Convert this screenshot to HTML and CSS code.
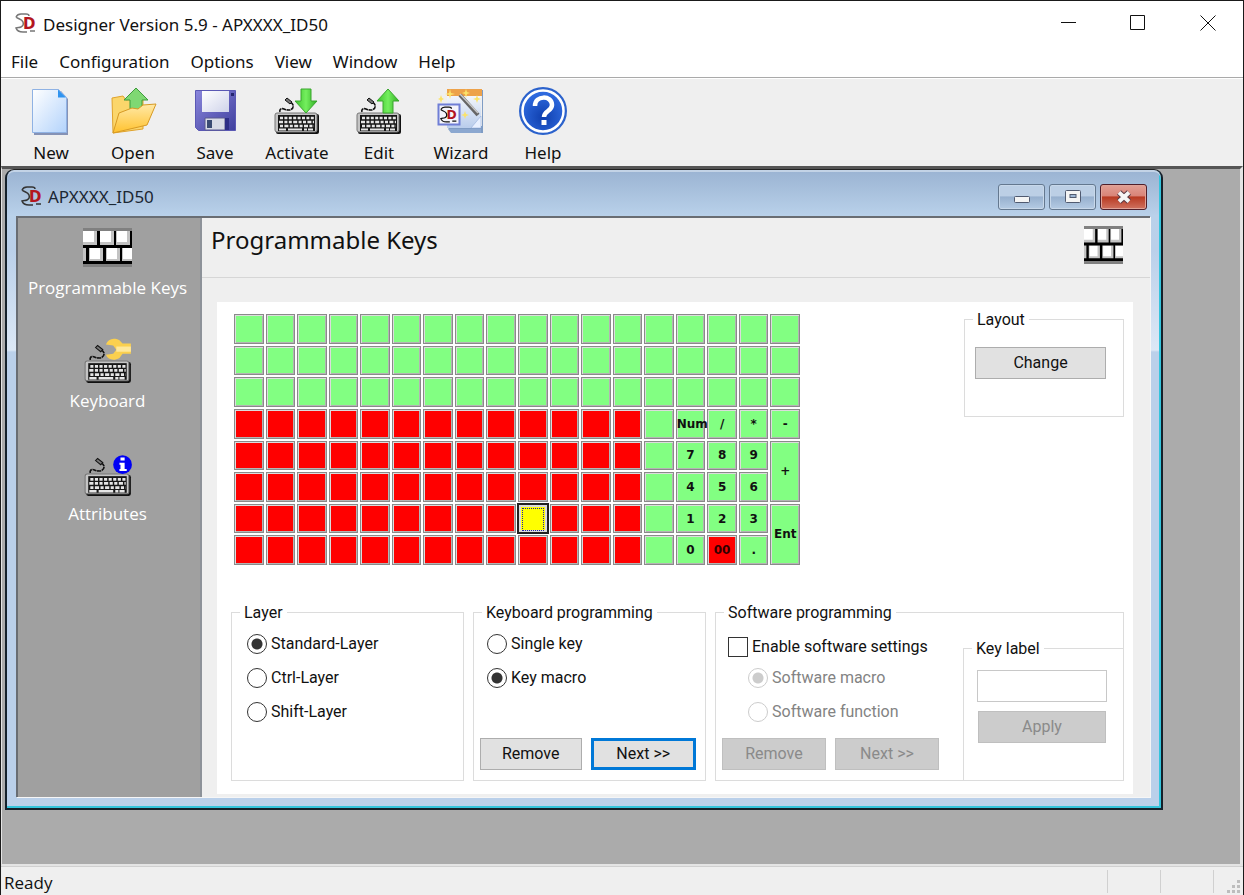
FILE: index.html
```
<!DOCTYPE html>
<html lang="en">
<head>
<meta charset="utf-8">
<title>Designer Version 5.9 - APXXXX_ID50</title>
<link rel="stylesheet" href="styles.css">
</head>
<body>
<svg class="defs" aria-hidden="true">
  <defs>
    <linearGradient id="gPage" x1="0" y1="0" x2="1" y2="1"><stop offset="0" stop-color="#fff"/><stop offset="1" stop-color="#b3d3fb"/></linearGradient>
    <linearGradient id="gFold" x1="0" y1="0" x2="0" y2="1"><stop offset="0" stop-color="#ffe9a8"/><stop offset="1" stop-color="#ffc22e"/></linearGradient>
    <linearGradient id="gGreen" x1="0" y1="0" x2="1" y2="0"><stop offset="0" stop-color="#3cc02c"/><stop offset=".5" stop-color="#74ef5e"/><stop offset="1" stop-color="#2fae22"/></linearGradient>
    <linearGradient id="gDisk" x1="0" y1="0" x2="1" y2="1"><stop offset="0" stop-color="#8a86dc"/><stop offset="1" stop-color="#3f3f9e"/></linearGradient>
    <linearGradient id="gWhite" x1="0" y1="0" x2="1" y2="1"><stop offset="0" stop-color="#fff"/><stop offset="1" stop-color="#cfd3ea"/></linearGradient>
    <radialGradient id="gHelp" cx=".5" cy=".65" r=".6"><stop offset="0" stop-color="#0f3fae"/><stop offset="1" stop-color="#2f6be0"/></radialGradient>
    <linearGradient id="gBook" x1="0" y1="0" x2="0" y2="1"><stop offset="0" stop-color="#fdfdff"/><stop offset="1" stop-color="#b9cdec"/></linearGradient>
    <symbol id="keyboard" viewBox="0 0 50 50">
      <path d="M8 26c-1-3 2-4 4-3s3 1 5 1 5-2 4-5-3-2-4-4" fill="none" stroke="#111" stroke-width="1.600" stroke-dasharray="4 .6"/>
      <path d="M13 14l2-2 5 4-2 2z" fill="#777" stroke="#111"/>
      <rect x="4" y="28" width="43" height="20" rx="2" fill="#111"/>
      <rect x="3" y="27" width="42" height="19" rx="2" fill="#c4c4c4" stroke="#777"/>
      <rect x="6" y="29" width="37" height="16" fill="#161616"/>
      <g stroke="#e6e6e6" stroke-width="2.600" fill="none">
        <path d="M8 32h34" stroke-dasharray="3 1.400"/>
        <path d="M7 36h35" stroke-dasharray="4 1.400 3 1.400 3 1.400"/>
        <path d="M8 40h34" stroke-dasharray="3 1.400 4 1.400"/>
        <path d="M7 43.500h7m2 0h14m2 0h3m1 0h5" stroke-width="2.200"/>
      </g>
    </symbol>
    <symbol id="bricks" viewBox="0 0 49 39" preserveAspectRatio="none">
      <path fill="#c3c3c3" d="M0 0h49v39H0z"/>
      <path fill="#808080" d="M0 0h49v3H0zM0 36h49v3H0z"/>
      <path fill="#fff" d="M0 3h11v11H0zM17 3h11v11H17zM34 3h10v11H34zM7 20h10v11H7zM24 20h10v11H24zM40 20h9v11h-9z"/>
      <path fill="#000" d="M14 3h3v14h-3zM31 3h2v14h-2zM47 3h2v14h-2zM0 17h49v3H0zM3 20h3v14H3zM20 20h3v14h-3zM37 20h2v14h-2zM0 33h49v3H0z"/>
    </symbol>
    <symbol id="logo" viewBox="0 0 22 20">
      <path d="M1 4c1-2 3-3 5-3h5c2 0 3 1 3 2M1 4c2 2 6 2 7 5s0 4-2 5-3 0-5 1c1 3 4 4 7 4h4m3-1h5" fill="none" stroke="currentColor" stroke-width="1.500"/>
      <text x="8" y="16" class="logo-letter">D</text>
    </symbol>
  </defs>
</svg>
<div class="app">
  <header class="titlebar">
    <svg class="logo light"><use href="#logo"/></svg>
    <h1>Designer Version 5.9 - APXXXX_ID50</h1>
    <div class="caption-buttons">
      <button type="button" aria-label="Minimize"><svg width="16" height="16"><path d="M1 7.500h15"/></svg></button>
      <button type="button" aria-label="Maximize"><svg width="16" height="16"><path d="M.5.5h14v14H.5z"/></svg></button>
      <button type="button" aria-label="Close"><svg width="16" height="16"><path d="M.5.5l15 15M15.500.5l-15 15"/></svg></button>
    </div>
  </header>
  <nav class="menu">
    <button type="button">File</button><button type="button">Configuration</button><button type="button">Options</button><button type="button">View</button><button type="button">Window</button><button type="button">Help</button>
  </nav>
  <div class="toolbar">
    <button type="button"><svg viewBox="0 0 50 50">
      <path d="M8 5h27l7 8v36H8z" fill="#8592b5"/><path d="M6.500 3.500h26l8 8v35h-34z" fill="url(#gPage)" stroke="#8fb2e4"/><path d="M32 3.500l8 8h-8z" fill="#2f93ef"/></svg>New</button>
    <button type="button"><svg viewBox="0 0 50 50">
      <path d="M4 12l11-2 3 4 17-3v32L5 47z" fill="#fbd66b" stroke="#e0a32c"/>
      <path d="M28 2l12 12h-6v14H22V14h-6z" fill="#7fd873" stroke="#3f9c3c"/>
      <path d="M11 27l13-5 6 1 5-4 13-1-9 21-34 8z" fill="url(#gFold)" stroke="#d79a24"/></svg>Open</button>
    <button type="button"><svg viewBox="0 0 50 50">
      <path d="M5.500 4.500h40v40h-37l-3-3z" fill="url(#gDisk)" stroke="#5a58b4"/><path d="M12 5h27v21H12z" fill="url(#gWhite)"/><path d="M41 7h3v3h-3z" fill="#25256e"/>
      <path d="M15 32h20v12H15z" fill="#d9dbe6" stroke="#5a5a8e"/><path d="M17 34h5v8h-5z" fill="#3b4b73"/><path d="M35 32h4v12h-4z" fill="#2e2e86"/></svg>Save</button>
    <button type="button"><svg viewBox="0 0 50 50"><use href="#keyboard"/><path d="M29 3h10v12h6L34 27 23 15h6z" fill="url(#gGreen)" stroke="#3aa52f"/></svg>Activate</button>
    <button type="button"><svg viewBox="0 0 50 50"><use href="#keyboard"/><path d="M34 3l11 12h-6v12H29V15h-6z" fill="url(#gGreen)" stroke="#3aa52f"/></svg>Edit</button>
    <button type="button"><svg viewBox="0 0 50 50">
      <path d="M12 40h34V4h1v43H16l-4-5z" fill="#7f9cc4"/><path d="M11 4h34v38l-8 0H11z" fill="url(#gBook)"/><path d="M45 30v12l-10 0z" fill="#e8f0ff" stroke="#8ba6d4" stroke-width=".5"/>
      <path d="M11 3h35v7H11z" fill="#eda24a"/><path d="M12 43h33v4H15z" fill="#8ca8d0"/>
      <path d="M24 9l18 20" stroke="#666" stroke-width="4"/><path d="M24 8l18 19" stroke="#c9c9c9" stroke-width="1.500"/>
      <path d="M14 3l1 4 4 1-4 1-1 4-1-4-4-1 4-1zM30 3l1 3 3 1-3 1-1 4-1-4-3-1 3-1zM41 9l1 3 3 1-3 1-1 3-1-3-3-1 3-1zM29 25l1 3 3 1-3 1-1 3-1-3-3-1 3-1zM5 9l1 3 2 1-2 1-1 3-1-3-2-1 2-1z" fill="#fbe36a"/>
      <path d="M2.500 18.500h21v20h-21z" fill="#f4f4fb" stroke="#6f7ed6" stroke-width="2"/>
      <svg x="4" y="20" width="18" height="17"><use href="#logo"/></svg></svg>Wizard</button>
    <button type="button"><svg viewBox="0 0 50 50"><circle cx="25" cy="25" r="24" fill="#2b62cc"/><circle cx="25" cy="25" r="20.500" fill="url(#gHelp)" stroke="#fff" stroke-width="2.500"/>
      <path d="M17 20c0-11 17-11 17-1 0 6-8 6-8 12" fill="none" stroke="#fff" stroke-width="4.500"/><path d="M23.500 34h5v5h-5z" fill="#fff"/></svg>Help</button>
  </div>
  <main class="workspace">
    <section class="child">
      <header class="child-title">
        <svg class="logo"><use href="#logo"/></svg>
        <h2>APXXXX_ID50</h2>
        <div class="child-buttons">
          <button type="button" aria-label="Minimize"><svg width="20" height="14"><rect x="2.500" y="6.500" width="15" height="6" rx="1" fill="#f4f4f4" stroke="#505a70"/></svg></button>
          <button type="button" aria-label="Restore"><svg width="16" height="14"><rect x=".5" y=".5" width="15" height="12" rx="1" fill="#f4f4f4" stroke="#505a70"/><rect x="5" y="4.500" width="6" height="3" fill="#9db6d4" stroke="#505a70"/></svg></button>
          <button type="button" class="close" aria-label="Close"><svg width="18" height="14"><path d="M4 2.500l10 9M14 2.500l-10 9" stroke="#5a3a44" stroke-width="6"/><path d="M4 2.500l10 9M14 2.500l-10 9" stroke="#f6f6f6" stroke-width="4"/></svg></button>
        </div>
      </header>
      <div class="client">
        <nav class="side">
          <button type="button"><svg class="brick-icon"><use href="#bricks"/></svg>Programmable Keys</button>
          <button type="button"><svg class="kb-icon" viewBox="0 0 50 50"><use href="#keyboard"/><path d="M23 11l7 1 3 4-3 4-7 1c2 5 8 6 13 3l3-4h8V10h-8l-3-3c-6-3-11-1-13 4z" fill="#fbd04e"/><path d="M33 13h14v5H33z" fill="#ffe89a"/></svg>Keyboard</button>
          <button type="button"><svg class="kb-icon" viewBox="0 0 50 50"><use href="#keyboard"/><circle cx="39" cy="18" r="9" fill="#0000f4"/><path d="M37 11h4v3h-4zM36 16h5v6h2v2h-7v-2h1v-4h-1z" fill="#fff"/></svg>Attributes</button>
        </nav>
        <div class="page">
          <header class="page-head"><h3>Programmable Keys</h3><svg class="head-icon"><use href="#bricks"/></svg></header>
          <div class="panel">
            <div class="top-row">
              <div class="keys" id="keys"></div>
              <fieldset class="layout-box"><legend>Layout</legend><button type="button" class="btn">Change</button></fieldset>
            </div>
            <div class="groups">
              <fieldset><legend>Layer</legend>
                <label class="opt"><input type="radio" name="layer" checked>Standard-Layer</label>
                <label class="opt"><input type="radio" name="layer">Ctrl-Layer</label>
                <label class="opt"><input type="radio" name="layer">Shift-Layer</label>
              </fieldset>
              <fieldset><legend>Keyboard programming</legend>
                <div class="stack">
                  <label class="opt"><input type="radio" name="kp">Single key</label>
                  <label class="opt"><input type="radio" name="kp" checked>Key macro</label>
                  <div class="actions"><button type="button" class="btn">Remove</button><button type="button" class="btn primary">Next &gt;&gt;</button></div>
                </div>
              </fieldset>
              <fieldset class="software"><legend>Software programming</legend>
                <div class="split">
                  <div class="stack">
                    <label class="opt check"><input type="checkbox">Enable software settings</label>
                    <label class="opt sub"><input type="radio" name="sp" checked disabled>Software macro</label>
                    <label class="opt sub"><input type="radio" name="sp" disabled>Software function</label>
                    <div class="actions"><button type="button" class="btn" disabled>Remove</button><button type="button" class="btn" disabled>Next &gt;&gt;</button></div>
                  </div>
                  <fieldset class="key-label"><legend><label for="keylabel">Key label</label></legend>
                    <input type="text" id="keylabel">
                    <button type="button" class="btn" disabled>Apply</button>
                  </fieldset>
                </div>
              </fieldset>
            </div>
          </div>
        </div>
      </div>
    </section>
  </main>
  <footer class="status"><span class="ready">Ready</span><span class="cell"></span><span class="cell"></span><span class="cell grip"><svg width="13" height="13" fill="#bdbdbd"><path d="M10 0h3v3h-3zM5 5h3v3H5zM10 5h3v3h-3zM0 10h3v3H0zM5 10h3v3H5zM10 10h3v3h-3z"/></svg></span></footer>
</div>
<script src="keys.js"></script>
</body>
</html>
```
FILE: styles.css
```
* { box-sizing: border-box; }
body {
  margin: 0;
  background: #efefef;
  color: #111;
  font: 17px/22px "Noto Sans", "Open Sans", sans-serif;
}
h1, h2, h3 { margin: 0; font-weight: 400; }
button, input { font: inherit; color: inherit; }
button { padding: 0; border: 0; background: none; }
.defs { position: absolute; width: 0; height: 0; }
.app {
  display: flex;
  flex-direction: column;
  min-height: 100vh;
  border: 1px solid #1a1a1a;
  border-bottom: 0;
}
.logo { width: 22px; height: 20px; margin-bottom: 3px; color: #333; }
.logo.light { color: #777; }
.logo-letter { font: bold 15px "DejaVu Sans", sans-serif; fill: #b3161f; }

.titlebar {
  display: flex;
  align-items: center;
  height: 47px;
  padding-left: 14px;
  background: #fff;
}
.titlebar h1 { margin-left: 6px; font-size: 17px; flex: 1; }
.caption-buttons { display: flex; align-self: flex-start; }
.caption-buttons button { width: 70px; height: 44px; }
.caption-buttons svg { display: block; margin: auto; fill: none; stroke: #111; }

.menu {
  display: flex;
  gap: 21px;
  height: 30px;
  padding-left: 10px;
  background: #fff;
  border-bottom: 1px solid #aaa;
}
.menu button { height: 27px; }

.toolbar {
  display: flex;
  height: 88px;
  padding: 6px 0 0 9px;
  border-top: 1px solid #fff;
  background: #efefef;
}
.toolbar button { width: 82px; height: 80px; }
.toolbar button > svg { display: block; width: 50px; height: 50px; margin: 0 auto 6px; }

.workspace {
  flex: 1;
  padding: 0 77px 32px 3px;
  border: solid #e4e4e4;
  border-width: 0 3px 2px 1px;
  border-top: 3px solid #555;
  background: #ababab;
}
.child {
  padding: 0 11px 11px 9px;
  border: 2px solid #15212b;
  border-top: 1px solid #222;
  border-radius: 9px 9px 0 0;
  box-shadow: inset 0 2px 0 #c3d3e6, inset -2px -2px 0 #34c4dc;
  background: linear-gradient(#9ab3d2 0, #b9d1ea 46px, #bad0ea 80px, #dce8f6 180px, #bad0ea 182px);
}
.child-title {
  display: flex;
  align-items: center;
  height: 46px;
  padding: 8px 3px 0 5px;
}
.child-title h2 { flex: 1; margin-left: 5px; font-size: 17px; color: #1b2733; }
.child-buttons { display: flex; gap: 4px; }
.child-buttons button {
  display: grid;
  place-items: center;
  width: 47px;
  height: 26px;
  border: 1px solid #64788f;
  border-radius: 3px;
  box-shadow: inset 0 0 0 1px #c8d8ea;
  background: linear-gradient(#bccfe5 0 45%, #97b0ce 50%, #b5cbe4);
}
.child-buttons .close {
  border-color: #501f2a;
  box-shadow: inset 0 0 0 1px #e0a398;
  background: linear-gradient(#e2a095 0, #d98478 45%, #b83a22 50%, #d07260);
}
.client {
  display: flex;
  border: solid #696d73;
  border-width: 2px 0 0 2px;
  box-shadow: 1px 1px 0 #f6f6f6;
  background: #efefef;
}
.side {
  display: flex;
  flex-direction: column;
  width: 184px;
  padding: 10px 3px 0 0;
  background: #a0a0a0;
  border-right: 2px solid #8d9299;
  font-family: "Open Sans", "Noto Sans", sans-serif;
}
.side button {
  display: flex;
  flex-direction: column;
  align-items: center;
  justify-content: flex-end;
  height: 113px;
  padding-bottom: 32px;
  color: #fff;
}
.side button:first-child { height: 103px; }
.side .brick-icon { width: 49px; height: 39px; margin-bottom: 10px; }
.side .kb-icon { width: 54px; height: 52px; margin-bottom: 5px; }

.page { flex: 1; min-width: 0; padding-bottom: 3px; }
.page-head {
  display: flex;
  justify-content: space-between;
  height: 60px;
  padding: 8px 27px 0 9px;
  border-bottom: 1px solid #d6d6d6;
}
.page-head h3 { font-size: 24px; line-height: 28px; }
.head-icon { width: 39px; height: 38px; }
.panel {
  margin: 24px 17px 0 15px;
  padding: 6px 9px 13px 14px;
  background: #fff;
  font: 16px/22px Roboto, "Liberation Sans", sans-serif;
}
.top-row { display: flex; justify-content: space-between; align-items: flex-start; }
.keys {
  display: grid;
  grid-template-columns: repeat(18, minmax(0, 1fr));
  grid-template-rows: repeat(8, minmax(0, 1fr));
  gap: 2px;
  width: 566px;
  height: 251px;
  margin: 6px 0 36px 3px;
}
.key {
  border: 1px solid #8a8a8a;
  box-shadow: inset 1px 1px 0 #dcdcdc, inset -1px -1px 0 #b4b4b4;
  background: #82ff82;
  font: bold 12px/14px "DejaVu Sans", sans-serif;
  white-space: nowrap;
}
.key.red { background: #f00; color: #300; }
.key.tall { grid-row: span 2; }
.key.current {
  margin: -1px;
  padding: 3px;
  border: 2px solid #222;
  box-shadow: inset 0 0 0 2px #dcdcdc;
  background: #ff0;
}
.key.current::before { content: ""; display: block; height: 100%; border: 1px dotted #22a; }

fieldset { min-width: 0; margin: 0; padding: 0; border: 1px solid #dcdcdc; }
legend { margin-left: 8px; padding: 1px 4px 0; line-height: 21px; }
.layout-box { width: 160px; height: 109px; padding: 17px 17px 0 10px; }
.layout-box legend { margin-left: -2px; }
.btn {
  height: 32px;
  border: 1px solid #adadad;
  background: #e1e1e1;
}
.btn:disabled { background: #ccc; border-color: #bfbfbf; color: #8a8a8a; }
.btn.primary { border: 3px solid #0078d7; }
.layout-box .btn { width: 100%; }
.groups { display: grid; grid-template-columns: 233fr 233fr 409fr; gap: 9px; }
.groups > fieldset { height: 180px; padding-top: 4px; }
.groups > .software { padding-top: 0; }
.opt { display: flex; align-items: center; gap: 4px; height: 34px; padding-left: 15px; }
.opt input {
  appearance: none;
  flex: none;
  width: 20px;
  height: 20px;
  margin: 0;
  border: 1px solid #333;
  border-radius: 50%;
  background: #fff;
}
.opt input:checked { background: radial-gradient(circle, #333 0 5px, #fff 6px); }
.opt input[type="checkbox"] { border-radius: 0; }
.opt input:disabled { border-color: #ccc; }
.opt input:disabled:checked { background: radial-gradient(circle, #ccc 0 5px, #fff 6px); }
.opt:has(:disabled) { color: #838383; }
.stack .opt { padding-left: 13px; }
.stack .check { padding: 6px 0 0 12px; }
.stack .sub { padding-left: 32px; }
.stack { display: flex; flex-direction: column; height: 100%; }
.actions { display: flex; gap: 9px; margin-top: auto; padding: 0 9px 10px 6px; }
.actions .btn { flex: 1 1 0; min-width: 0; }
.split { display: flex; justify-content: space-between; height: 100%; }
.split > .stack { width: 232px; padding-top: 4px; }
.key-label {
  width: 160px;
  margin-top: 14px;
  padding: 11px 16px 0 13px;
  border-width: 1px 0 0 1px;
}
.key-label legend { margin-left: -5px; }
.key-label input { display: block; width: 100%; height: 32px; border: 1px solid #c8c8c8; background: #fff; }
.key-label .btn { display: block; width: calc(100% - 2px); margin: 9px 1px 0; }

.status { display: flex; height: 29px; border-top: 1px solid #d0d0d0; font-family: "Open Sans", "Noto Sans", sans-serif; }
.status .ready { flex: 1; padding: 5px 0 0 3px; }
.cell { width: 53px; margin: 3px 0 2px; border-left: 1px solid #d0d0d0; }
.grip { display: flex; justify-content: flex-end; align-items: flex-end; width: 30px; padding-right: 3px; }
```
FILE: keys.js
```
const rows = [
  "g g g g g g g g g g g g g g g g g g",
  "g g g g g g g g g g g g g g g g g g",
  "g g g g g g g g g g g g g g g g g g",
  "r r r r r r r r r r r r r g Num / * -",
  "r r r r r r r r r r r r r g 7 8 9 T+",
  "r r r r r r r r r r r r r g 4 5 6",
  "r r r r r r r r r c r r r g 1 2 3 TEnt",
  "r r r r r r r r r r r r r g 0 R00 ."
];
const pad = document.getElementById("keys");
for (const row of rows) {
  for (const code of row.split(" ")) {
    const key = document.createElement("button");
    key.type = "button";
    key.className = "key";
    let text = code;
    if (code === "r") key.classList.add("red");
    if (code === "c") key.classList.add("current");
    if ("grc".includes(code)) text = "";
    if (code[0] === "T") { key.classList.add("tall"); text = code.slice(1); }
    if (code[0] === "R") { key.classList.add("red"); text = code.slice(1); }
    key.textContent = text;
    pad.append(key);
  }
}
```
